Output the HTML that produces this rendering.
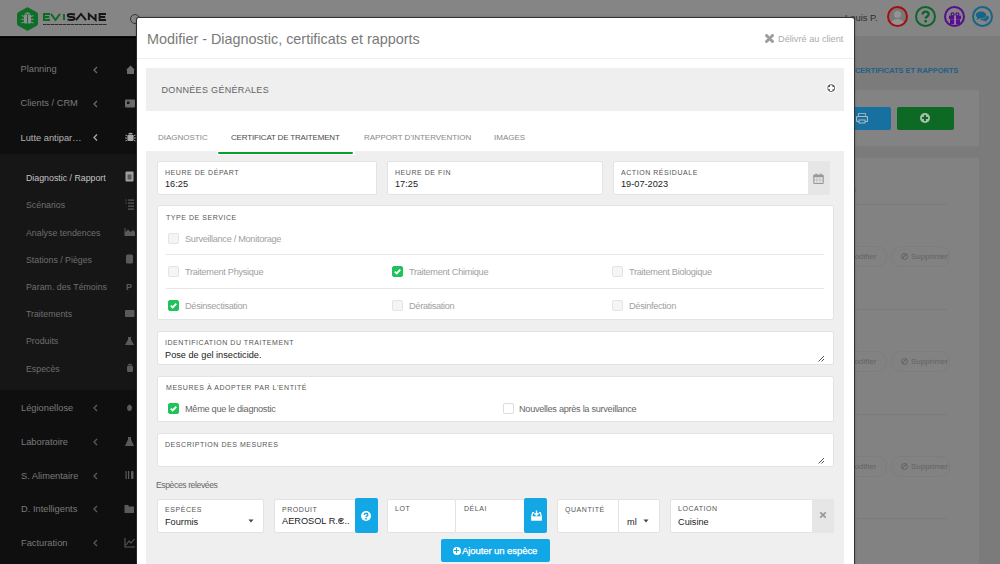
<!DOCTYPE html>
<html><head><meta charset="utf-8">
<style>
*{box-sizing:border-box;margin:0;padding:0}
html,body{width:1000px;height:564px;overflow:hidden;background:#7a7a7a;font-family:"Liberation Sans",sans-serif;position:relative}
.a{position:absolute}
.t{position:absolute;white-space:nowrap;line-height:1}
.sitem{position:absolute;left:21px;font-size:9.3px;color:#7a7a7a;white-space:nowrap;line-height:1}
.ssub{position:absolute;left:26px;font-size:8.8px;color:#6e6e6e;white-space:nowrap;line-height:1}
.lbl{position:absolute;font-size:7px;letter-spacing:0.55px;color:#555;white-space:nowrap;text-transform:uppercase;line-height:1}
.tab{position:absolute;font-size:8px;color:#888;white-space:nowrap;text-transform:uppercase;line-height:1;top:134px}
.val{position:absolute;font-size:9.2px;color:#222;white-space:nowrap;line-height:1}
.box{position:absolute;background:#fff;border:1px solid #e3e3e3;border-radius:2px}
.cb{position:absolute;width:11px;height:11px;border:1px solid #e4e4e4;background:#f5f5f5;border-radius:2px}
.cb.on{background:#1fc25b;border-color:#1fc25b}
.cb svg{position:absolute;left:-1px;top:-1px}
.cbt{position:absolute;font-size:9.2px;letter-spacing:-0.3px;color:#a0a0a0;white-space:nowrap;line-height:1}
</style></head><body>
<!-- TOPBAR -->
<div class="a" style="left:0;top:0;width:1000px;height:36px;background:#858585"></div>
<svg class="a" style="left:17px;top:7px" width="21" height="24" viewBox="0 0 21 24">
  <path d="M9.3,0.7 Q10.5,0 11.7,0.7 L19.8,5.3 Q21,6 21,7.4 L21,16.6 Q21,18 19.8,18.7 L11.7,23.3 Q10.5,24 9.3,23.3 L1.2,18.7 Q0,18 0,16.6 L0,7.4 Q0,6 1.2,5.3 Z" fill="#0d6e27"/>
  <path d="M7.2,6.8 Q10.5,3.8 13.8,6.8 Z" fill="#8e8e8e"/>
  <rect x="7" y="7.6" width="7" height="9" rx="1" fill="#8e8e8e"/>
  <rect x="10.1" y="8" width="0.9" height="8.6" fill="#0d6e27"/>
  <path d="M7,9.5 L4.6,8.6 M7,12.2 L4.3,12.2 M7,15 L4.6,16 M14,9.5 L16.4,8.6 M14,12.2 L16.7,12.2 M14,15 L16.4,16" stroke="#8e8e8e" stroke-width="1.1"/>
</svg>
<svg class="a" style="left:42px;top:12px" width="66" height="10" viewBox="0 0 66 10" fill="none" stroke-width="1.9">
  <path d="M8,2.05 L1.9,2.05 L1.9,7.95 L8,7.95 M1.9,5.00 L7.2,5.00" stroke="#0c6a22"/>
  <path d="M9,1.90 L13.5,7.95 L18,1.90" stroke="#0c6a22"/>
  <path d="M22,1.90 L22,8.10" stroke="#0c6a22"/>
  <path d="M33,2.49 Q31.5,2.05 29,2.05 Q25.8,2.05 25.8,3.52 Q25.8,5.00 29,5.00 Q32.6,5.00 32.6,6.48 Q32.6,7.95 29.5,7.95 Q27,7.95 25.6,7.36" stroke="#161616"/>
  <path d="M34,8.10 L39,1.90 L44,8.10" stroke="#161616"/>
  <path d="M46.8,8.10 L46.8,2.05 L53.6,7.95 L53.6,1.90" stroke="#161616"/>
  <path d="M64,2.05 L57.6,2.05 L57.6,7.95 L64,7.95 M57.6,5.00 L63.2,5.00" stroke="#161616"/>
</svg>
<div class="a" style="left:43px;top:23.5px;width:64px;height:1.6px;background:repeating-linear-gradient(90deg,#2a2a2a 0 3px,#555 3px 4px)"></div>

<div class="t" style="left:845px;top:12.5px;font-size:9.4px;color:#2e2e2e">Louis P.</div>
<div class="a" style="left:887px;top:6px;width:21px;height:21px;border-radius:50%;border:2.2px solid #a80d0d;background:#787878;overflow:hidden">
  <div class="a" style="left:5px;top:3px;width:7px;height:7px;border-radius:50%;background:#949494"></div>
  <div class="a" style="left:2px;top:11px;width:13px;height:10px;border-radius:50% 50% 0 0;background:#949494"></div>
</div>
<div class="a" style="left:915px;top:6px;width:21px;height:21px;border-radius:50%;border:2px solid #0b652c"></div>
<svg class="a" style="left:920px;top:10px" width="11" height="14" viewBox="0 0 11 14"><path d="M2.6,4.6 Q2.6,1.6 5.6,1.6 Q8.6,1.6 8.6,4.2 Q8.6,5.8 7,6.6 Q5.6,7.3 5.6,8.6" fill="none" stroke="#0b652c" stroke-width="2.3"/><rect x="4.4" y="10" width="2.5" height="2.4" fill="#0b652c"/></svg>
<div class="a" style="left:944px;top:6px;width:21px;height:21px;border-radius:50%;border:2px solid #55108a"></div>
<svg class="a" style="left:944px;top:6px" width="22" height="22" viewBox="0 0 22 22"><circle cx="8.6" cy="8.3" r="1.5" fill="none" stroke="#55108a" stroke-width="1.3"/><circle cx="13.4" cy="8.3" r="1.5" fill="none" stroke="#55108a" stroke-width="1.3"/><rect x="5" y="9.6" width="12" height="3.4" fill="#55108a"/><rect x="6" y="13.3" width="10" height="4.7" fill="#55108a"/><rect x="10.3" y="9.6" width="1.5" height="8.4" fill="#a898b8"/></svg>
<div class="a" style="left:972px;top:6px;width:21px;height:21px;border-radius:50%;border:2px solid #156588"></div>
<svg class="a" style="left:975px;top:10px" width="15" height="13" viewBox="0 0 15 13"><ellipse cx="6" cy="5" rx="5.2" ry="3.6" fill="#156588"/><path d="M2.5,7.5 L1.5,10 L5,8.3 Z" fill="#156588"/><path d="M12,5.5 Q14.5,6.5 13.8,8.6 Q13.2,10 11,10.4 L13,12.2 L8.5,10.5 Q6,10.4 5,9.2 Q10.5,9.3 12,5.5 Z" fill="#156588"/></svg>

<!-- SIDEBAR -->
<div class="a" style="left:0;top:36px;width:140px;height:528px;background:#0f0f0f"></div>
<div class="a" style="left:0;top:36.5px;width:140px;height:1.5px;background:#000"></div>
<div class="a" style="left:0;top:154px;width:140px;height:236px;background:#161616"></div>
<div class="sitem" style="top:65.2px;left:20.5px">Planning</div>
<div class="sitem" style="top:99.2px;left:20.5px">Clients / CRM</div>
<div class="sitem" style="top:133.7px;left:20.5px;color:#b4b4b4">Lutte antipar…</div>
<div class="ssub" style="top:173.6px;color:#c4c4c4">Diagnostic / Rapport</div>
<div class="ssub" style="top:200.6px">Scénarios</div>
<div class="ssub" style="top:228.6px">Analyse tendences</div>
<div class="ssub" style="top:255.6px">Stations / Pièges</div>
<div class="ssub" style="top:282.6px">Param. des Témoins</div>
<div class="ssub" style="top:309.6px">Traitements</div>
<div class="ssub" style="top:336.6px">Produits</div>
<div class="ssub" style="top:364.6px">Especès</div>
<div class="sitem" style="top:403.7px">Légionellose</div>
<div class="sitem" style="top:437.7px">Laboratoire</div>
<div class="sitem" style="top:471.7px">S. Alimentaire</div>
<div class="sitem" style="top:504.7px">D. Intelligents</div>
<div class="sitem" style="top:538.7px">Facturation</div>
<svg class="a" style="left:0;top:0" width="140" height="564" fill="none" stroke="#6a6a6a" stroke-width="1.3">
  <path d="M97,67 L94,70 L97,73 M97,101 L94,104 L97,107"/>
  <path d="M97,134.5 L94,137.5 L97,140.5" stroke="#aaa"/>
  <path d="M97,405 L94,408 L97,411 M97,439 L94,442 L97,445 M97,473 L94,476 L97,479 M97,506 L94,509 L97,512 M97,540 L94,543 L97,546" stroke="#5a5a5a"/>
</svg>
<svg class="a" style="left:0;top:0" width="137" height="564">
  <g fill="#6a6a6a">
    <path d="M126,70 L130.5,65.5 L135,70 L134,70 L134,74 L127,74 L127,70 Z"/>
    <rect x="125" y="99.5" width="10" height="8" rx="1"/>
  </g>
  <rect x="127" y="101.5" width="2.5" height="2.5" fill="#111"/>
  <g fill="#a8a8a8">
    <path d="M128,134 Q130.5,131.5 133,134 Z"/><rect x="127.5" y="134.5" width="6" height="6.5" rx="1.5"/>
    <path d="M127.5,136 L125.5,135 M127.5,138 L125,138 M127.5,140 L125.5,141 M133.5,136 L135.5,135 M133.5,138 L136,138 M133.5,140 L135.5,141" stroke="#a8a8a8" stroke-width="0.9"/>
  </g>
  <g fill="#a0a0a0"><rect x="125.5" y="171.5" width="8" height="10" rx="1"/></g>
  <rect x="127.5" y="174.5" width="4" height="5" fill="#161616" opacity="0.5"/>
  <g fill="#5a5a5a">
    <rect x="128" y="199.5" width="6" height="1.2"/><rect x="128" y="202.5" width="6" height="1.2"/><rect x="128" y="205.5" width="6" height="1.2"/><rect x="128" y="208.5" width="6" height="1.2"/>
    <rect x="125.5" y="199.5" width="1.2" height="1.2"/><rect x="125.5" y="202.5" width="1.2" height="1.2"/>
    <path d="M124.5,236 L124.5,228 L125.5,228 L125.5,232 L128,229.5 L130.5,232 L133,230 L135,232 L135,236 Z"/>
    <rect x="126" y="254.5" width="7" height="9" rx="1.5"/>
    <text x="126" y="290" font-size="9" font-family="Liberation Sans" font-weight="bold">P</text>
    <rect x="125" y="310" width="9.5" height="7" rx="1"/>
    <path d="M128,337 L131,337 L131,339.5 L134,345 L125,345 L128,339.5 Z"/>
    <path d="M127.5,365 Q130,362.5 132.5,365 Z"/><rect x="127" y="365.5" width="6" height="6.5" rx="1.5"/>
    <path d="M127,407 Q129.5,402 132,407 Q132,411 129.5,411 Q127,411 127,407 Z"/>
    <path d="M128,437 L131,437 L131,439.5 L134,446 L125,446 L128,439.5 Z"/>
    <rect x="125.5" y="471" width="1.2" height="8"/><rect x="128" y="471" width="1.2" height="8"/><rect x="131" y="471" width="2.5" height="8" rx="1"/>
    <path d="M124.5,505 L128,505 L129,506.5 L134,506.5 L134,513 L124.5,513 Z"/>
  </g>
  <path d="M125,538 L125,547 L135,547 M126,545 L129,541 L131,543 L134.5,539" fill="none" stroke="#5a5a5a" stroke-width="1.1"/>
</svg>

<!-- CONTENT BACKGROUND -->
<div class="a" style="left:140px;top:36px;width:860px;height:528px;background:#7b7b7b"></div>
<div class="t" style="left:855px;top:67px;font-size:7.5px;font-weight:bold;letter-spacing:-0.05px;color:#1d6088">CERTIFICATS ET RAPPORTS</div>
<div class="a" style="left:140px;top:90px;width:839px;height:56px;background:#838383"></div>
<div class="a" style="left:840px;top:107px;width:51px;height:23px;background:#1870a0;border-radius:2px"></div>
<div class="a" style="left:897px;top:107px;width:57px;height:23px;background:#0c6a25;border-radius:2px"></div>
<svg class="a" style="left:856px;top:113px" width="12" height="11"><rect x="2.5" y="0.5" width="7" height="3" fill="none" stroke="#9ab" stroke-width="1"/><rect x="0.5" y="3.5" width="11" height="5" rx="1" fill="none" stroke="#a8bcc8" stroke-width="1.2"/><rect x="3" y="7" width="6" height="3" fill="#1870a0" stroke="#a8bcc8" stroke-width="1"/></svg>
<div class="a" style="left:920px;top:113px;width:10px;height:10px;border-radius:50%;background:#a9bda9"></div>
<div class="a" style="left:924.2px;top:115px;width:1.6px;height:6px;background:#0c6a25"></div>
<div class="a" style="left:922px;top:117.2px;width:6px;height:1.6px;background:#0c6a25"></div>
<div class="a" style="left:140px;top:158px;width:839px;height:406px;background:#828282"></div>
<div class="a" style="left:850px;top:204px;width:97px;height:1px;background:#7a7a7a"></div>
<div class="a" style="left:850px;top:309px;width:97px;height:1px;background:#7a7a7a"></div>
<div class="a" style="left:850px;top:414px;width:97px;height:1px;background:#7a7a7a"></div>
<div class="a" style="left:850px;top:518px;width:97px;height:1px;background:#7a7a7a"></div>
<div class="t" style="left:852px;top:185px;font-size:9px;color:#6a6a6a">s</div>
<div class="a" style="left:830px;top:246px;width:57px;height:21px;border:1px solid #7d7d7d;border-radius:10px"></div>
<div class="a" style="left:891px;top:246px;width:59px;height:21px;border:1px solid #7d7d7d;border-radius:10px"></div>
<div class="t" style="left:848px;top:252.5px;font-size:8px;color:#626262">Modifier</div>
<div class="t" style="left:911px;top:252.5px;font-size:8px;color:#626262">Supprimer</div>
<div class="a" style="left:901px;top:252.5px;width:7px;height:7px;border-radius:50%;border:1.2px solid #626262"></div><div class="a" style="left:904px;top:253.0px;width:1.1px;height:6px;background:#626262;transform:rotate(45deg)"></div>
<div class="a" style="left:830px;top:351px;width:57px;height:21px;border:1px solid #7d7d7d;border-radius:10px"></div>
<div class="a" style="left:891px;top:351px;width:59px;height:21px;border:1px solid #7d7d7d;border-radius:10px"></div>
<div class="t" style="left:848px;top:357.5px;font-size:8px;color:#626262">Modifier</div>
<div class="t" style="left:911px;top:357.5px;font-size:8px;color:#626262">Supprimer</div>
<div class="a" style="left:901px;top:357.5px;width:7px;height:7px;border-radius:50%;border:1.2px solid #626262"></div><div class="a" style="left:904px;top:358.0px;width:1.1px;height:6px;background:#626262;transform:rotate(45deg)"></div>
<div class="a" style="left:830px;top:456px;width:57px;height:21px;border:1px solid #7d7d7d;border-radius:10px"></div>
<div class="a" style="left:891px;top:456px;width:59px;height:21px;border:1px solid #7d7d7d;border-radius:10px"></div>
<div class="t" style="left:848px;top:462.5px;font-size:8px;color:#626262">Modifier</div>
<div class="t" style="left:911px;top:462.5px;font-size:8px;color:#626262">Supprimer</div>
<div class="a" style="left:901px;top:462.5px;width:7px;height:7px;border-radius:50%;border:1.2px solid #626262"></div><div class="a" style="left:904px;top:463.0px;width:1.1px;height:6px;background:#626262;transform:rotate(45deg)"></div>

<!-- MODAL -->
<div class="a" style="left:129.5px;top:13.5px;width:10px;height:10px;border-radius:50%;border:1.6px solid #353535"></div>
<div id="modal" class="a" style="left:136px;top:17px;width:719px;height:560px;background:#fff;border:1px solid #333;border-left:1.5px solid #2a2a2a;border-radius:3px;box-shadow:0 0 2px rgba(0,0,0,.3)"></div>
<div class="t" style="left:147px;top:31.5px;font-size:14.4px;color:#7a7a7a">Modifier - Diagnostic, certificats et rapports</div>
<svg class="a" style="left:765px;top:34px" width="9" height="9" viewBox="0 0 9 9"><path d="M1.5,1.5 L7.5,7.5 M7.5,1.5 L1.5,7.5" stroke="#9c9c9c" stroke-width="2.9" stroke-linecap="round"/></svg>
<div class="t" style="left:778px;top:34.5px;font-size:9.2px;color:#ababab">Délivré au client</div>
<div class="a" style="left:137px;top:58px;width:717px;height:1px;background:#efefef"></div>
<div class="a" style="left:146px;top:68px;width:698px;height:43px;background:#efefef"></div>
<div class="t" style="left:161.5px;top:85.6px;font-size:9px;letter-spacing:0.32px;color:#636363">DONNÉES GÉNÉRALES</div>
<svg class="a" style="left:825px;top:82px" width="12" height="12" viewBox="0 0 12 12"><circle cx="6.2" cy="6.1" r="5" fill="#fff"/><circle cx="6.2" cy="6.1" r="3.8" fill="#555"/><path d="M6.2,3.2 V9 M3.3,6.1 H9.1" stroke="#fff" stroke-width="2.4"/></svg>
<div class="tab" style="left:158px">Diagnostic</div>
<div class="tab" style="left:231px;color:#4a4a4a;letter-spacing:-0.17px">Certificat de traitement</div>
<div class="tab" style="left:364px">Rapport d'intervention</div>
<div class="tab" style="left:494px">Images</div>
<div class="a" style="left:146px;top:151px;width:698px;height:420px;background:#efefef"></div>
<div class="a" style="left:216.5px;top:150.8px;width:138px;height:4.4px;background:#fff"></div>
<div class="a" style="left:218px;top:151.8px;width:135px;height:2.3px;background:#07a02c;border-radius:1px"></div>

<div class="box" style="left:157px;top:161px;width:220px;height:34px"></div>
<div class="lbl" style="left:165px;top:169px">Heure de départ</div>
<div class="val" style="left:165px;top:180px">16:25</div>
<div class="box" style="left:387px;top:161px;width:216px;height:34px"></div>
<div class="lbl" style="left:395px;top:169px">Heure de fin</div>
<div class="val" style="left:395px;top:180px">17:25</div>
<div class="box" style="left:613px;top:161px;width:217px;height:34px"></div>
<div class="a" style="left:808px;top:161px;width:22px;height:34px;background:#e6e6e6;border-radius:0 2px 2px 0"></div>
<svg class="a" style="left:813px;top:173px" width="11" height="11" viewBox="0 0 11 11"><rect x="0.8" y="2" width="9.4" height="8.5" rx="1" fill="none" stroke="#999" stroke-width="1.2"/><rect x="0.8" y="2" width="9.4" height="2.2" fill="#999"/><rect x="2.5" y="0.5" width="1.3" height="2.5" fill="#999"/><rect x="7.2" y="0.5" width="1.3" height="2.5" fill="#999"/><path d="M3.9,4 V10 M7,4 V10 M1,7 H10" stroke="#bbb" stroke-width="0.8"/></svg>
<div class="lbl" style="left:621px;top:169px">Action résiduale</div>
<div class="val" style="left:621px;top:180px">19-07-2023</div>

<div class="box" style="left:157px;top:205px;width:677px;height:115px"></div>
<div class="lbl" style="left:166px;top:214px">Type de service</div>
<div class="a" style="left:166px;top:254px;width:658px;height:1px;background:#e6e6e6"></div>
<div class="a" style="left:166px;top:288px;width:658px;height:1px;background:#e6e6e6"></div>
<div class="cb" style="left:168px;top:233px"></div><div class="cbt" style="left:185px;top:234.6px">Surveillance / Monitorage</div>
<div class="cb" style="left:168px;top:266px"></div><div class="cbt" style="left:185px;top:267.6px">Traitement Physique</div>
<div class="cb on" style="left:392px;top:266px"><svg width="11" height="11" viewBox="0 0 11 11"><path d="M2.8,5.6 L4.7,7.4 L8.3,3.6" fill="none" stroke="#fff" stroke-width="1.8"/></svg></div><div class="cbt" style="left:409px;top:267.6px">Traitement Chimique</div>
<div class="cb" style="left:612px;top:266px"></div><div class="cbt" style="left:629px;top:267.6px">Traitement Biologique</div>
<div class="cb on" style="left:168px;top:300px"><svg width="11" height="11" viewBox="0 0 11 11"><path d="M2.8,5.6 L4.7,7.4 L8.3,3.6" fill="none" stroke="#fff" stroke-width="1.8"/></svg></div><div class="cbt" style="left:185px;top:301.6px">Désinsectisation</div>
<div class="cb" style="left:392px;top:300px"></div><div class="cbt" style="left:409px;top:301.6px">Dératisation</div>
<div class="cb" style="left:612px;top:300px"></div><div class="cbt" style="left:629px;top:301.6px">Désinfection</div>

<div class="box" style="left:157px;top:331px;width:677px;height:34px"></div>
<div class="lbl" style="left:165px;top:339px">Identification du traitement</div>
<div class="val" style="left:165px;top:351px">Pose de gel insecticide.</div>
<svg class="a" style="left:817px;top:354px" width="9" height="9" viewBox="0 0 9 9"><path d="M1.5,7.5 L7,2 M4.5,7.5 L7,5" stroke="#555" stroke-width="1"/></svg>

<div class="box" style="left:157px;top:376px;width:677px;height:46px"></div>
<div class="lbl" style="left:166px;top:384px">Mesures à adopter par l'entité</div>
<div class="cb on" style="left:168px;top:402.5px"><svg width="11" height="11" viewBox="0 0 11 11"><path d="M2.8,5.6 L4.7,7.4 L8.3,3.6" fill="none" stroke="#fff" stroke-width="1.8"/></svg></div><div class="cbt" style="left:185px;top:404.6px;color:#666">Même que le diagnostic</div>
<div class="cb" style="left:503px;top:402.5px;background:#fff;border-color:#ddd"></div><div class="cbt" style="left:519px;top:404.6px;color:#666">Nouvelles après la surveillance</div>

<div class="box" style="left:157px;top:433px;width:677px;height:34px"></div>
<div class="lbl" style="left:165px;top:441px">Description des mesures</div>
<svg class="a" style="left:817px;top:456px" width="9" height="9" viewBox="0 0 9 9"><path d="M1.5,7.5 L7,2 M4.5,7.5 L7,5" stroke="#555" stroke-width="1"/></svg>

<div class="t" style="left:156px;top:481px;font-size:8.6px;letter-spacing:-0.4px;color:#666">Espèces relevées</div>

<div class="box" style="left:157px;top:499px;width:107px;height:34px"></div>
<div class="lbl" style="left:165px;top:506px">Espèces</div>
<div class="val" style="left:165px;top:518px">Fourmis</div>
<svg class="a" style="left:248px;top:519px" width="6" height="4"><path d="M0.5,0.5 L5.5,0.5 L3,3.5 Z" fill="#444"/></svg>
<div class="box" style="left:274px;top:499px;width:83px;height:34px"></div>
<div class="a" style="left:355px;top:498px;width:23px;height:35px;background:#14a7e6;border-radius:2px"></div>
<div class="a" style="left:361px;top:511px;width:10px;height:10px;border-radius:50%;background:#fff"></div>
<svg class="a" style="left:361px;top:511px" width="10" height="10" viewBox="0 0 10 10"><path d="M3.4,4 Q3.4,2.3 5.1,2.3 Q6.8,2.3 6.8,3.8 Q6.8,4.7 5.9,5.1 Q5.1,5.5 5.1,6.2" fill="none" stroke="#14a7e6" stroke-width="1.5"/><rect x="4.3" y="7" width="1.6" height="1.5" fill="#14a7e6"/></svg>
<div class="lbl" style="left:282px;top:506px">Produit</div>
<div class="val" style="left:282px;top:517px">AEROSOL R.C..</div>
<svg class="a" style="left:338px;top:519px" width="6" height="4"><path d="M0.5,0.5 L5.5,0.5 L3,3.5 Z" fill="#444"/></svg>

<div class="box" style="left:387px;top:499px;width:69px;height:34px"></div>
<div class="box" style="left:455px;top:499px;width:71px;height:34px"></div>
<div class="a" style="left:524px;top:498px;width:23px;height:35px;background:#14a7e6;border-radius:2px"></div>
<svg class="a" style="left:531px;top:510px" width="11" height="11" viewBox="0 0 11 11"><path d="M3,2.6 L1.8,2.6 L0.8,6 L0.8,10 L10.2,10 L10.2,6 L9.2,2.6 L8,2.6" fill="none" stroke="#fff" stroke-width="1.3"/><rect x="0.8" y="6.3" width="9.4" height="3.7" fill="#fff"/><path d="M5.5,0.5 L5.5,5 M3.4,3.2 L5.5,5.3 L7.6,3.2" fill="none" stroke="#fff" stroke-width="1.4"/></svg>
<div class="lbl" style="left:395px;top:505px">Lot</div>
<div class="lbl" style="left:464px;top:505px">Délai</div>

<div class="box" style="left:557px;top:499px;width:62px;height:34px"></div>
<div class="lbl" style="left:565px;top:506px">Quantité</div>
<div class="box" style="left:618px;top:499px;width:42px;height:34px"></div>
<div class="val" style="left:627px;top:518px">ml</div>
<svg class="a" style="left:643px;top:519px" width="6" height="4"><path d="M0.5,0.5 L5.5,0.5 L3,3.5 Z" fill="#444"/></svg>

<div class="box" style="left:670px;top:499px;width:164px;height:34px"></div>
<div class="a" style="left:812px;top:499px;width:22px;height:34px;background:#e6e6e6;border-radius:0 2px 2px 0"></div>
<svg class="a" style="left:819px;top:511px" width="8" height="8" viewBox="0 0 8 8"><path d="M1.3,1.3 L6.7,6.7 M6.7,1.3 L1.3,6.7" stroke="#999" stroke-width="1.8"/></svg>
<div class="lbl" style="left:678px;top:505px">Location</div>
<div class="val" style="left:678px;top:518px">Cuisine</div>

<div class="a" style="left:441px;top:539.3px;width:109px;height:22.4px;background:#12a8e8;border-radius:2px"></div>
<div class="a" style="left:452.5px;top:546.5px;width:8px;height:8px;border-radius:50%;background:#fff"></div>
<div class="a" style="left:455.8px;top:548px;width:1.4px;height:5px;background:#14a7e6"></div>
<div class="a" style="left:454px;top:549.8px;width:5px;height:1.4px;background:#14a7e6"></div>
<div class="t" style="left:462px;top:545.5px;font-size:9.6px;letter-spacing:-0.12px;color:#fff;-webkit-text-stroke:0.25px #fff">Ajouter un espèce</div>

</body></html>
